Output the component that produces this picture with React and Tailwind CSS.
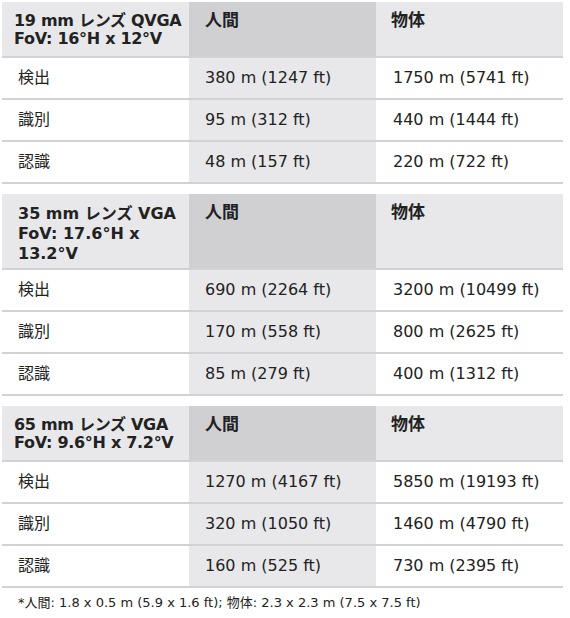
import React from "react";

const tables = [
  {
    title: ["19 mm レンズ QVGA", "FoV: 16°H x 12°V"],
    tight: true,
    rows: [
      ["検出", "380 m (1247 ft)", "1750 m (5741 ft)"],
      ["識別", "95 m (312 ft)", "440 m (1444 ft)"],
      ["認識", "48 m (157 ft)", "220 m (722 ft)"],
    ],
  },
  {
    title: ["35 mm レンズ VGA", "FoV: 17.6°H x", "13.2°V"],
    tight: false,
    rows: [
      ["検出", "690 m (2264 ft)", "3200 m (10499 ft)"],
      ["識別", "170 m (558 ft)", "800 m (2625 ft)"],
      ["認識", "85 m (279 ft)", "400 m (1312 ft)"],
    ],
  },
  {
    title: ["65 mm レンズ VGA", "FoV: 9.6°H x 7.2°V"],
    tight: true,
    rows: [
      ["検出", "1270 m (4167 ft)", "5850 m (19193 ft)"],
      ["識別", "320 m (1050 ft)", "1460 m (4790 ft)"],
      ["認識", "160 m (525 ft)", "730 m (2395 ft)"],
    ],
  },
];

const RangeTable = ({ t }) => (
  <table className="w-[561px] table-fixed border-collapse">
    <thead>
      <tr className="border-b-2 border-[#d2d2d4]">
        <th
          className={`bg-[#e8e8ea] align-top text-left font-bold ${
            t.tight
              ? "h-[55px] pl-[12px] pr-1 pt-[10px] text-[16px] leading-[18px] tracking-[-0.3px]"
              : "h-[75px] pl-[16px] pr-2 pt-[10px] text-[16px] leading-[20px]"
          }`}
        >
          {t.title.map((line) => (
            <div key={line} className="whitespace-nowrap">
              {line}
            </div>
          ))}
        </th>
        <th className="bg-[#d0d0d2] align-top text-left font-bold pl-[16px] pt-[8px] text-[17px] leading-[20px]">
          人間
        </th>
        <th className="bg-[#e8e8ea] align-top text-left font-bold pl-[15px] pt-[8px] text-[17px] leading-[20px]">
          物体
        </th>
      </tr>
    </thead>
    <tbody>
      {t.rows.map((r) => (
        <tr key={r[0]} className="h-[42px] border-b-2 border-[#d2d2d4]">
          <td className="bg-white pl-[16px] text-[16px]">{r[0]}</td>
          <td className="bg-[#e8e8ea] pl-[16px] text-[16px]">{r[1]}</td>
          <td className="bg-white pl-[17px] text-[16px]">{r[2]}</td>
        </tr>
      ))}
    </tbody>
  </table>
);

export default function App() {
  return (
    <div
      className="w-[570px] h-[618px] bg-white text-[#222] pt-[2px] pl-[2px]"
      style={{ fontFamily: "'DejaVu Sans', 'Noto Sans CJK JP', sans-serif" }}
    >
      <div className="flex flex-col gap-[10px]">
        {tables.map((t) => (
          <RangeTable key={t.title[0]} t={t} />
        ))}
      </div>
      <p className="pl-[16px] pt-[6px] text-[13px] leading-[18px]">
        *人間: 1.8 x 0.5 m (5.9 x 1.6 ft); 物体: 2.3 x 2.3 m (7.5 x 7.5 ft)
      </p>
    </div>
  );
}
